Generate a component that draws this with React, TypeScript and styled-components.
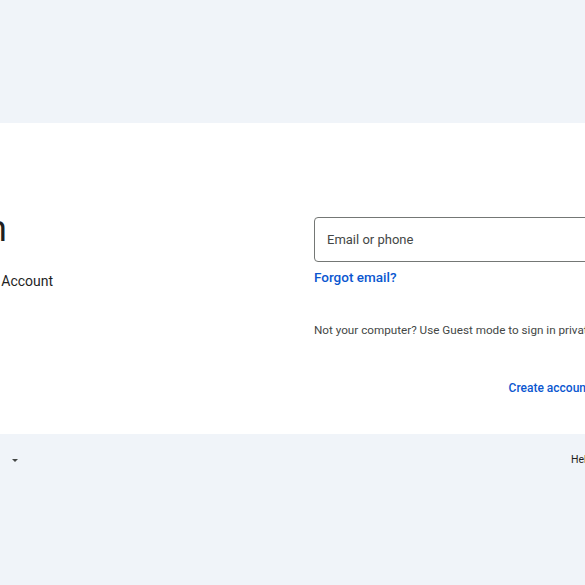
import styled, { createGlobalStyle } from 'styled-components'

const GlobalStyle = createGlobalStyle`
    html, body {
        margin: 0;
        padding: 0;
        background-color: #f0f4f9;
        overflow: hidden;
    }

    body {
        font-family: Roboto, "Liberation Sans", Arial, sans-serif;
        color: #1f1f1f;
    }
`;

const Page = styled.div`
    display: flex;
    flex-direction: column;
    width: 585px;
    height: 585px;
    overflow: hidden;
`;

const TopBand = styled.div`
    height: 123px;
    flex-shrink: 0;
`;

const Shell = styled.div`
    margin-left: -144px;
    width: 867px;
    flex-shrink: 0;
`;

const Card = styled.main`
    display: grid;
    grid-template-columns: 418px 369px;
    padding: 36px 40px 26px;
    background-color: #fff;
    border-radius: 28px;
`;

const Intro = styled.div`
    display: flex;
    flex-direction: column;
`;

const Logo = styled.svg`
    width: 24px;
    height: 24px;
    margin-bottom: 24px;
`;

const Heading = styled.h1`
    margin: 0;
    font-size: 36px;
    line-height: 44px;
    font-weight: 400;
    letter-spacing: 0.5px;
    color: #1f1f1f;
`;

const Subtitle = styled.p`
    margin: 20px 0 0;
    font-size: 14px;
    line-height: 20px;
    color: #1f1f1f;
`;

const Form = styled.form`
    display: flex;
    flex-direction: column;
    padding-top: 58px;
`;

const Field = styled.input`
    box-sizing: border-box;
    height: 45px;
    width: 100%;
    padding: 0 12px;
    border: 1px solid #747775;
    border-radius: 4px;
    font-family: inherit;
    font-size: 13px;
    color: #1f1f1f;
    outline: none;

    &::placeholder {
        color: #444746;
    }
`;

const Link = styled.a`
    font-size: 13px;
    line-height: 20px;
    font-weight: 500;
    color: #0b57d0;
    text-decoration: none;
    cursor: pointer;
`;

const ForgotLink = styled(Link)`
    margin-top: 5px;
    font-size: 13.5px;
    align-self: flex-start;
`;

const Notice = styled.p`
    margin: 33px 0 0;
    font-size: 11.7px;
    line-height: 20px;
    color: #444746;
    white-space: nowrap;
`;

const Actions = styled.div`
    display: flex;
    justify-content: flex-end;
    gap: 8px;
    margin-top: 28px;
`;

const Button = styled.button<{ $primary?: boolean }>`
    height: 40px;
    padding: 0 ${props => props.$primary ? '24px' : '12px'};
    border: none;
    border-radius: 100px;
    font-family: inherit;
    font-size: 12px;
    font-weight: 500;
    cursor: pointer;
    ${props => props.$primary
        ? 'background-color: #0b57d0; color: #fff;'
        : 'background-color: transparent; color: #0b57d0;'}
`;

const Footer = styled.footer`
    display: flex;
    justify-content: space-between;
    align-items: center;
    padding: 16px 27px 16px 34px;
    font-size: 10.5px;
    line-height: 20px;
    color: #1f1f1f;
`;

const LangSelect = styled.div`
    display: flex;
    align-items: center;
    gap: 16px;
`;

const Caret = styled.span`
    width: 0;
    height: 0;
    border-left: 3.5px solid transparent;
    border-right: 3.5px solid transparent;
    border-top: 3.5px solid #444746;
`;

const FooterLinks = styled.nav`
    display: flex;
    gap: 20px;
`;

export default function App() {
    return (
        <Page>
            <GlobalStyle />
            <TopBand />
            <Shell>
                <Card>
                    <Intro>
                        <Logo viewBox="0 0 48 48">
                            <path fill="#EA4335" d="M24 9.5c3.5 0 6.6 1.2 9.1 3.6l6.8-6.8C35.8 2.4 30.3 0 24 0 14.6 0 6.6 5.4 2.7 13.3l7.9 6.1C12.5 13.7 17.8 9.5 24 9.5z" />
                            <path fill="#4285F4" d="M46.5 24.5c0-1.6-.1-3.1-.4-4.5H24v9h12.7c-.6 2.9-2.2 5.4-4.7 7.1l7.7 6c4.5-4.2 6.8-10.4 6.8-17.6z" />
                            <path fill="#FBBC05" d="M10.5 28.6c-.5-1.4-.8-3-.8-4.6s.3-3.2.8-4.6l-7.9-6.1C1 16.6 0 20.2 0 24s1 7.4 2.7 10.7l7.8-6.1z" />
                            <path fill="#34A853" d="M24 48c6.5 0 11.9-2.1 15.9-5.8l-7.7-6c-2.2 1.5-5 2.3-8.2 2.3-6.2 0-11.5-4.2-13.4-9.9l-7.9 6.1C6.6 42.6 14.6 48 24 48z" />
                        </Logo>
                        <Heading>Sign in</Heading>
                        <Subtitle>Use your Google Account</Subtitle>
                    </Intro>
                    <Form onSubmit={e => e.preventDefault()}>
                        <Field type="email" placeholder="Email or phone" />
                        <ForgotLink>Forgot email?</ForgotLink>
                        <Notice>
                            Not your computer? Use Guest mode to sign in privately. <Link>Learn more about using Guest mode</Link>
                        </Notice>
                        <Actions>
                            <Button type="button">Create account</Button>
                            <Button type="submit" $primary>Next</Button>
                        </Actions>
                    </Form>
                </Card>
                <Footer>
                    <LangSelect>
                        <span>English (United States)</span>
                        <Caret />
                    </LangSelect>
                    <FooterLinks>
                        <span>Help</span>
                        <span>Privacy</span>
                        <span>Terms</span>
                    </FooterLinks>
                </Footer>
            </Shell>
        </Page>
    )
}
